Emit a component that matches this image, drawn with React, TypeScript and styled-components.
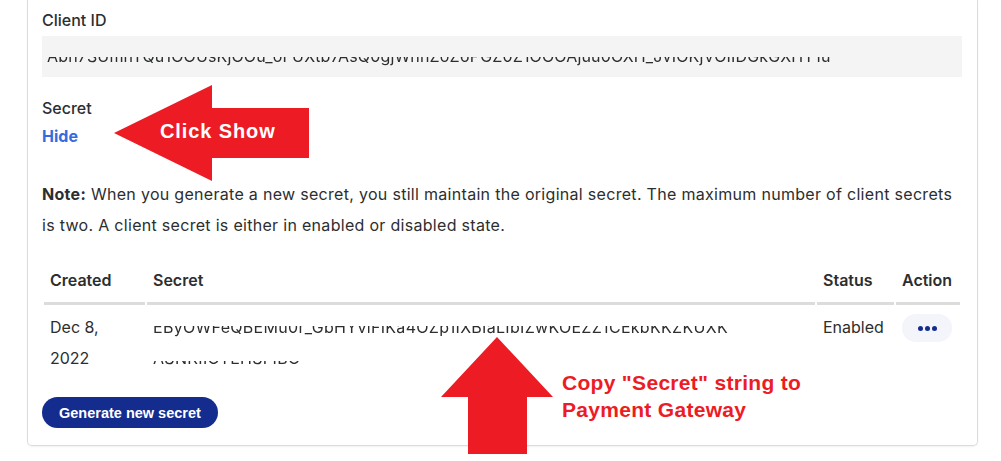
import React from "react";
import styled, { createGlobalStyle } from "styled-components";

const Global = createGlobalStyle`
  html, body { margin: 0; padding: 0; background: #fff; }
  body { font-family: Inter, "Noto Sans", Arial, sans-serif; color: #2c2e2f; }
  * { box-sizing: border-box; }
`;

const Page = styled.div`
  position: relative;
  width: 1001px;
  height: 461px;
  overflow: hidden;
  padding-left: 27px;
`;

const Card = styled.section`
  width: 951px;
  border: 1px solid #dcdcdc;
  border-top: none;
  border-radius: 0 0 5px 5px;
  box-shadow: 0 1px 2px rgba(0, 0, 0, 0.06);
  padding: 8px 14px 17px 14px;
  display: flex;
  flex-direction: column;
  align-items: flex-start;
`;

const Label = styled.div<{ $mt?: number }>`
  font-size: 16px;
  line-height: 24px;
  font-weight: 500;
  margin-top: ${(p) => p.$mt ?? 0}px;
`;

const IdBox = styled.div`
  margin-top: 4px;
  width: 920px;
  height: 41px;
  background: #f4f4f4;
  padding-left: 5px;
  overflow: hidden;
`;

const Masked = styled.span<{ $cut: number; $lh: number; $ls?: number }>`
  display: block;
  font-size: 16px;
  line-height: ${(p) => p.$lh}px;
  letter-spacing: ${(p) => p.$ls ?? 0}px;
  white-space: nowrap;
  color: #2c2e2f;
  -webkit-mask-image: linear-gradient(to bottom, transparent 0 ${(p) => p.$cut}px, #000 ${(p) => p.$cut}px);
  mask-image: linear-gradient(to bottom, transparent 0 ${(p) => p.$cut}px, #000 ${(p) => p.$cut}px);
`;

const LinkText = styled.a`
  margin-top: 4px;
  font-size: 16px;
  line-height: 24px;
  font-weight: 700;
  color: #356cdc;
  text-decoration: none;
`;

const Note = styled.p`
  margin: 31px 0 0 0;
  font-size: 16px;
  line-height: 31px;
  max-width: 920px;
  letter-spacing: 0.3px;
  b { font-weight: 700; }
`;

const Table = styled.table`
  margin-top: 15px;
  width: 920px;
  border-collapse: separate;
  border-spacing: 2px 0;
  table-layout: fixed;
`;

const Th = styled.th<{ $w: number }>`
  width: ${(p) => p.$w}px;
  text-align: left;
  font-size: 16px;
  line-height: 24px;
  font-weight: 600;
  padding: 12px 6px 10px 6px;
  border-bottom: 3px solid #dcdcdc;
`;

const Td = styled.td`
  vertical-align: top;
  font-size: 16px;
  line-height: 31px;
  padding: 7px 6px;
`;

const DotsButton = styled.button`
  margin-top: 2px;
  width: 50px;
  height: 28px;
  border: none;
  border-radius: 14px;
  background: #f3f5fa;
  display: flex;
  align-items: center;
  justify-content: center;
  gap: 2px;
  padding: 0;
`;

const Dot = styled.span`
  width: 5px;
  height: 5px;
  border-radius: 50%;
  background: #142c8e;
`;

const PrimaryButton = styled.button`
  margin-top: 16px;
  height: 31px;
  padding: 0 17px;
  border: none;
  border-radius: 16px;
  background: #142c8e;
  color: #fff;
  font-family: "Liberation Sans", Arial, sans-serif;
  font-weight: 700;
  font-size: 14.5px;
`;

const Overlay = styled.svg`
  position: absolute;
  left: 0;
  top: 0;
  pointer-events: none;
`;

const Callout = styled.div<{ $x: number; $y: number; $color: string; $size: number; $ls: number }>`
  position: absolute;
  left: ${(p) => p.$x}px;
  top: ${(p) => p.$y}px;
  color: ${(p) => p.$color};
  font-family: "Liberation Sans", Arial, sans-serif;
  font-weight: 700;
  font-size: ${(p) => p.$size}px;
  letter-spacing: ${(p) => p.$ls}px;
  line-height: 27px;
  white-space: nowrap;
`;

export default function App() {
  return (
    <Page>
      <Global />
      <Card>
        <Label>Client ID</Label>
        <IdBox>
          <Masked $cut={21} $lh={41} $ls={0.15}>
            Abn7SUmhYQu1OOUsKjOOu_oFUXtb7AsQ0gjWhnZoZ6PGZ0Z1OOOAjuu0OXH_JvIOKjVOIIDGkGXHY1u
          </Masked>
        </IdBox>
        <Label $mt={19}>Secret</Label>
        <LinkText href="#">Hide</LinkText>
        <Note>
          <b>Note:</b> When you generate a new secret, you still maintain the original secret. The maximum number of client
          secrets
          <br />
          is two. A client secret is either in enabled or disabled state.
        </Note>
        <Table>
          <thead>
            <tr>
              <Th $w={101}>Created</Th>
              <Th $w={668}>Secret</Th>
              <Th $w={77}>Status</Th>
              <Th $w={64}>Action</Th>
            </tr>
          </thead>
          <tbody>
            <tr>
              <Td>Dec 8, 2022</Td>
              <Td>
                <Masked $cut={14} $lh={31} $ls={0.3}>EByOWFeQBEMu0r_GbHYvlFIKa4OZp1IXBIaLIbIZwKOEZZ1CEkbKKZKUXK</Masked>
                <Masked $cut={18} $lh={31} $ls={0.3}>ASNKIIOTEHSFIBO</Masked>
              </Td>
              <Td>Enabled</Td>
              <Td>
                <DotsButton aria-label="More actions">
                  <Dot />
                  <Dot />
                  <Dot />
                </DotsButton>
              </Td>
            </tr>
          </tbody>
        </Table>
        <PrimaryButton>Generate new secret</PrimaryButton>
      </Card>
      <Overlay width="1001" height="461" viewBox="0 0 1001 461">
        <polygon points="114,133 212,85 212,108 309,108 309,158 212,158 212,181" fill="#ed1c24" />
        <polygon points="497,337 553,397 527,397 527,454 468,454 468,397 441,397" fill="#ed1c24" />
      </Overlay>
      <Callout $x={160} $y={118} $color="#fff" $size={20} $ls={0.9}>
        Click Show
      </Callout>
      <Callout $x={562} $y={369} $color="#ed1c24" $size={21} $ls={0.3}>
        Copy "Secret" string to
        <br />
        Payment Gateway
      </Callout>
    </Page>
  );
}
